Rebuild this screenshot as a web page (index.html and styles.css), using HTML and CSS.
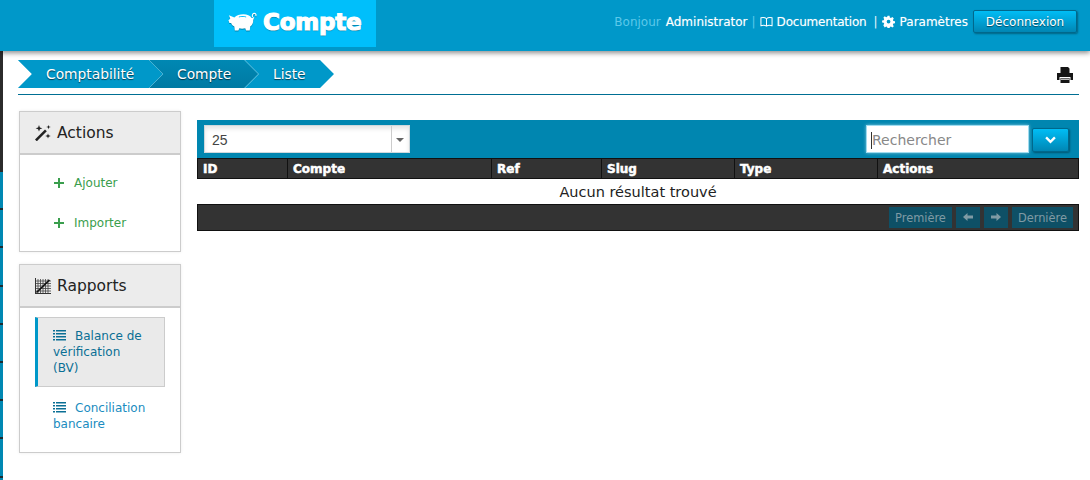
FILE: index.html
```html
<!DOCTYPE html>
<html lang="fr">
<head>
<meta charset="utf-8">
<title>Compte</title>
<link rel="stylesheet" href="styles.css">
</head>
<body>
<header class="topbar">
  <div class="brand">
    <svg class="pig" viewBox="0 0 32 22" width="29" height="20"><path fill="#fff" d="M1 3.500 L7 6 C9.500 3.500 13 2.500 17 2.500 C21 2.500 24.500 4 26 6.500 L29 5.500 L27.800 9 C28 12 26.500 15 24.500 16 L24 20.500 L20 20.500 L19 18 C16.500 18.500 14.500 18.500 12.500 18 L11.500 20.500 L7.500 20.500 L7 16 C5 15 3.800 13.500 3.500 12 L1.500 12 L0.500 9 L2.500 7.500 Z"/><path fill="none" stroke="#fff" stroke-width="1.200" d="M27 5.500 C26.500 3 27.500 1.500 29 1.500 C30.500 1.500 31.500 3 30.500 4.500"/><path fill="#00bffb" d="M12 5 C14 4.200 18 4.200 20 5 L20 6 C18 5.400 14 5.400 12 6 Z"/></svg>
    <span class="brand-text">Compte</span>
  </div>
  <nav class="usernav">
    <span class="hello">Bonjour</span>
    <a class="navlink">Administrator</a>
    <span class="sep dim">|</span>
    <svg class="navicon" viewBox="0 0 14 12" width="13" height="12"><path fill="none" stroke="#fff" stroke-width="1.100" d="M7 2.500 C5.500 1 3 1 1 1.500 L1 10 C3 9.500 5.500 9.500 7 10.500 C8.500 9.500 11 9.500 13 10 L13 1.500 C11 1 8.500 1 7 2.500 Z M7 2.500 L7 10.500"/></svg>
    <a class="navlink navlink-doc">Documentation</a>
    <span class="sep">|</span>
    <svg class="navicon navicon-gear" viewBox="0 0 14 14" width="13" height="13"><path fill="#fff" fill-rule="evenodd" d="M5.800 0h2.400l.4 2 1.300.6 1.800-1.100 1.700 1.700-1.100 1.800.6 1.300 2 .4v2.400l-2 .4-.6 1.300 1.100 1.800-1.700 1.700-1.800-1.100-1.300.6-.4 2H5.800l-.4-2-1.300-.6-1.800 1.100L.6 11.600l1.100-1.800-.6-1.300-2-.4V5.700l2-.4.6-1.300L.6 2.200 2.300.5l1.800 1.100 1.300-.6z M7 4.700a2.300 2.300 0 1 0 0 4.600 2.300 2.300 0 0 0 0-4.600z" transform="translate(.9 .9) scale(.88)"/></svg>
    <a class="navlink">Paramètres</a>
    <button class="logout">Déconnexion</button>
  </nav>
</header>

<div class="page">
  <div class="strip"></div>
  <div class="content">
    <div class="crumbbar">
      <ol class="crumbs">
        <li class="crumb crumb-first"><span class="crumb-fill">Comptabilité</span></li>
        <li class="crumb crumb-mid"><span class="crumb-fill">Compte</span></li>
        <li class="crumb crumb-last"><span class="crumb-fill">Liste</span></li>
      </ol>
      <svg class="printer" viewBox="0 0 16 16" width="16" height="16"><path fill="#151515" d="M3.500 0h7.500L12.500 1.500V6h-9z M0 6h16v7h-2.500v-3h-11v3H0z M3.500 11h9v5h-9z"/><path fill="#fff" d="M4 11.500h8v1.500h-8z" opacity=".7"/></svg>
    </div>

    <div class="columns">
      <aside class="sidebar">
        <section class="panel">
          <h2 class="panel-head">
            <svg class="panel-icon" viewBox="0 0 16 16" width="16" height="16"><path fill="#222" d="M0 14.500 L10 4.500 L11.800 6.300 L1.800 16.300 Z"/><path fill="#222" d="M4 0 L4.900 2.400 L7.400 3.300 L4.900 4.200 L4 6.600 L3.100 4.200 L.6 3.300 L3.100 2.400 Z M13.500 0 L14.100 1.400 L15.800 2 L14.100 2.600 L13.500 4.200 L12.900 2.600 L11.200 2 L12.900 1.400 Z M13 8.500 L13.700 10.300 L15.700 11 L13.700 11.700 L13 13.600 L12.300 11.700 L10.300 11 L12.300 10.300 Z"/></svg>
            Actions
          </h2>
          <ul class="panel-list actions">
            <li class="action"><svg class="plus" viewBox="0 0 10 10" width="10" height="10"><path fill="#3a9e4d" d="M4 0h2v4h4v2H6v4H4V6H0V4h4z"/></svg>Ajouter</li>
            <li class="action"><svg class="plus" viewBox="0 0 10 10" width="10" height="10"><path fill="#3a9e4d" d="M4 0h2v4h4v2H6v4H4V6H0V4h4z"/></svg>Importer</li>
          </ul>
        </section>
        <section class="panel">
          <h2 class="panel-head">
            <svg class="panel-icon" viewBox="0 0 16 16" width="16" height="16"><path fill="#333" d="M0 0h1v15h15v1H0z"/><path stroke="#444" stroke-width=".8" fill="none" d="M3 1v14M5.500 1v14M8 1v14M10.500 1v14M13 1v14M1 3h15M1 5.500h15M1 8h15M1 10.500h15M1 13h15"/><path stroke="#111" stroke-width="1.700" fill="none" d="M1.500 14.500L14.500 2"/></svg>
            Rapports
          </h2>
          <ul class="panel-list reports">
            <li class="report report-active"><svg class="listicon" viewBox="0 0 13 11" width="13" height="11"><path fill="#0a6f95" d="M0 0h2v1.500H0zM3 0h10v1.500H3zM0 3h2v1.500H0zM3 3h10v1.500H3zM0 6h2v1.500H0zM3 6h10v1.500H3zM0 9h2v1.500H0zM3 9h10v1.500H3z"/></svg>Balance de vérification (BV)</li>
            <li class="report"><svg class="listicon" viewBox="0 0 13 11" width="13" height="11"><path fill="#0a6f95" d="M0 0h2v1.500H0zM3 0h10v1.500H3zM0 3h2v1.500H0zM3 3h10v1.500H3zM0 6h2v1.500H0zM3 6h10v1.500H3zM0 9h2v1.500H0zM3 9h10v1.500H3z"/></svg>Conciliation bancaire</li>
          </ul>
        </section>
      </aside>

      <main class="main">
        <div class="toolbar">
          <div class="select">
            <span class="select-value">25</span>
            <span class="select-arrow"></span>
          </div>
          <div class="search">
            <div class="search-input"><span class="caret"></span>Rechercher</div>
            <button class="search-btn"><svg viewBox="0 0 12 8" width="11" height="8"><path fill="none" stroke="#fff" stroke-width="2.600" d="M1.200 1.200L6 6l4.800-4.800"/></svg></button>
          </div>
        </div>
        <table class="grid">
          <colgroup>
            <col class="c-id"><col class="c-compte"><col class="c-ref"><col class="c-slug"><col class="c-type"><col class="c-actions">
          </colgroup>
          <thead>
            <tr><th>ID</th><th>Compte</th><th>Ref</th><th>Slug</th><th>Type</th><th>Actions</th></tr>
          </thead>
          <tbody>
            <tr><td class="empty" colspan="6">Aucun résultat trouvé</td></tr>
          </tbody>
        </table>
        <div class="pager">
          <button class="page-btn">Première</button>
          <button class="page-btn page-icon"><svg viewBox="0 0 10 8" width="10" height="8"><path fill="#7f9aa4" d="M0 4L4.500 0v2.500H10v3H4.500V8z"/></svg></button>
          <button class="page-btn page-icon"><svg viewBox="0 0 10 8" width="10" height="8"><path fill="#7f9aa4" d="M10 4L5.500 0v2.500H0v3h5.500V8z"/></svg></button>
          <button class="page-btn">Dernière</button>
        </div>
      </main>
    </div>
  </div>
</div>
</body>
</html>
```
FILE: styles.css
```css
* { box-sizing: border-box; }
html, body { margin: 0; padding: 0; }
body {
  width: 1090px;
  height: 480px;
  overflow: hidden;
  background: #fff;
  font-family: "DejaVu Sans", Verdana, sans-serif;
  font-size: 12px;
  color: #222;
}
ul, ol { list-style: none; margin: 0; padding: 0; }
h2 { margin: 0; font-weight: normal; }

/* top bar */
.topbar {
  position: relative;
  z-index: 2;
  height: 51px;
  background: #0098c9;
  box-shadow: 0 2px 5px rgba(0, 0, 0, .45);
  display: flex;
  justify-content: space-between;
  padding: 0 13px 0 214px;
}
.brand {
  width: 162px;
  height: 47px;
  background: #00bffb;
  display: flex;
  align-items: center;
  gap: 6px;
  padding: 0 0 3px 14px;
}
.pig { filter: drop-shadow(0 1px 0 rgba(0, 0, 0, .3)); }
.brand-text {
  font-size: 23px;
  font-weight: bold;
  color: #fff;
  -webkit-text-stroke: 1.200px #fff;
  text-shadow: 0 1px 1px rgba(0, 0, 0, .5);
  letter-spacing: -.2px;
}
.usernav {
  display: flex;
  align-items: center;
  gap: 4px;
  height: 43px;
  font-size: 12px;
  color: #fff;
}
.hello { color: #5cc8ea; margin-right: 1px; }
.navlink { color: #fff; text-shadow: 0 0 1px rgba(255, 255, 255, .4); }
.navlink-doc { letter-spacing: -.2px; margin-right: 3px; }
.sep { color: #e8f6fb; }
.sep.dim { color: #5cc8ea; }
.navicon { flex: none; }
.navicon-gear { margin-right: 1px; }
.logout {
  margin-left: 1px;
  width: 104px;
  height: 23px;
  border: 1px solid #00688c;
  border-radius: 2px;
  background: linear-gradient(#00bdf5, #0086b4);
  color: #fff;
  font: 12px "DejaVu Sans", Verdana, sans-serif;
  text-shadow: 0 1px 1px rgba(0, 0, 0, .5);
  box-shadow: 1px 1px 2px rgba(0, 0, 0, .35);
  padding: 0;
}

/* page shell */
.page { display: flex; height: 429px; }
.strip {
  flex: none;
  width: 3px;
  height: 429px;
  background:
    linear-gradient(#2b2b2b, #2b2b2b) top / 3px 121px no-repeat,
    repeating-linear-gradient(#0088b3 0, #0088b3 36.2px, #1c2a30 36.2px, #1c2a30 38.2px) 0 121px;
}
.content { flex: 1; padding: 9px 11px 0 15px; }

/* breadcrumb */
.crumbbar {
  display: flex;
  justify-content: space-between;
  align-items: center;
  height: 35px;
  padding-bottom: 6px;
  padding-right: 6px;
  border-bottom: 1px solid #006f94;
}
.crumbs { display: flex; height: 28px; }
.crumb {
  height: 28px;
  background: #4bb9dc;
  clip-path: polygon(0 0, calc(100% - 14px) 0, 100% 50%, calc(100% - 14px) 100%, 0 100%, 14px 50%);
  margin-right: -14px;
  color: #fff;
  font-size: 13.800px;
  text-shadow: 0 1px 1px rgba(0, 0, 0, .6);
}
.crumb-fill {
  display: flex;
  align-items: center;
  height: 100%;
  background: #0098c9;
  clip-path: polygon(0 0, calc(100% - 15px) 0, calc(100% - 1px) 50%, calc(100% - 15px) 100%, 0 100%, 14px 50%);
}
.crumb-first { width: 145px; background: #0098c9; }
.crumb-first .crumb-fill { padding-left: 28px; }
.crumb-mid { width: 110px; }
.crumb-mid .crumb-fill {
  padding-left: 28px;
  background: linear-gradient(#0088b3, #007aa3);
}
.crumb-last { width: 89px; background: #0098c9; margin-right: 0; margin-left: 0; }
.crumb-last .crumb-fill { padding-left: 28px; }
.printer { flex: none; margin-top: 2px; }

/* columns */
.columns { display: flex; align-items: flex-start; gap: 16px; margin-left: 1px; }

/* sidebar */
.sidebar {
  flex: none;
  width: 162px;
  padding-top: 16px;
  display: flex;
  flex-direction: column;
  gap: 12px;
}
.panel {
  border: 1px solid #ccc;
  box-shadow: 0 0 3px rgba(0, 0, 0, .08);
  background: #fff;
}
.panel-head {
  height: 43px;
  background: #ececec;
  border-bottom: 2px solid #ccc;
  display: flex;
  align-items: center;
  gap: 6px;
  padding-left: 15px;
  font-size: 15.500px;
  color: #222;
}
.panel-icon { flex: none; }
.actions { padding: 8px 0 8px 34px; }
.action {
  display: flex;
  align-items: center;
  gap: 10px;
  height: 40px;
  color: #3a9e4d;
  font-size: 12px;
}
.plus { flex: none; }
.reports { padding: 9px 15px 10px; display: flex; flex-direction: column; gap: 3px; }
.report {
  padding: 10px 16px 10px 18px;
  line-height: 16px;
  color: #1a8cc0;
  font-size: 12px;
}
.report-active {
  background: #eaeaea;
  border: 1px solid #ccc;
  border-left: 3px solid #0098c9;
  color: #0a6f95;
  padding: 10px 16px 10px 15px;
}
.listicon { margin-right: 9px; vertical-align: -1px; }

/* main */
.main { flex: 1; padding-top: 25px; min-width: 0; }
.toolbar {
  height: 38px;
  background: #0086b0;
  display: flex;
  justify-content: space-between;
  align-items: flex-start;
  padding: 5px 10px 0 7px;
}
.select {
  width: 206px;
  height: 28px;
  background: #fff;
  border: 1px solid #cfd8dc;
  box-shadow: inset 0 3px 4px rgba(0, 0, 0, .1);
  display: flex;
  align-items: center;
  justify-content: space-between;
  font-family: "Liberation Sans", Arial, sans-serif;
  font-size: 14px;
  color: #444;
}
.select-value { padding: 2px 0 0 7px; }
.select-arrow {
  width: 18px;
  height: 26px;
  border-left: 1px solid #ccc;
  position: relative;
}
.select-arrow::after {
  content: "";
  position: absolute;
  left: 4px;
  top: 12px;
  border: 4px solid transparent;
  border-top-color: #666;
}
.search { display: flex; gap: 3px; align-items: flex-start; }
.search-input {
  width: 163px;
  height: 28px;
  background: #fff;
  border: 1px solid #9fdcf0;
  box-shadow: 0 0 3px rgba(255, 255, 255, .5);
  display: flex;
  align-items: center;
  padding: 2px 0 0 4px;
  font-size: 14px;
  color: #888;
}
.caret { width: 1px; height: 17px; background: #333; flex: none; }
.search-btn {
  width: 37px;
  height: 24px;
  margin-top: 3px;
  border: 1px solid #00688c;
  border-radius: 2px;
  background: linear-gradient(#00bdf5, #0086b4);
  box-shadow: 1px 1px 2px rgba(0, 0, 0, .35);
  padding: 0;
  display: flex;
  align-items: center;
  justify-content: center;
}

/* table */
.grid {
  width: 881px;
  border-collapse: collapse;
  table-layout: fixed;
}
.c-id { width: 90px; }
.c-compte { width: 204px; }
.c-ref { width: 110px; }
.c-slug { width: 133px; }
.c-type { width: 143px; }
.c-actions { width: 201px; }
.grid th {
  height: 20px;
  background: #333;
  border: 1px solid #111;
  color: #fff;
  font-size: 12px;
  font-weight: bold;
  -webkit-text-stroke: .5px #fff;
  text-align: left;
  padding: 1px 5px 0;
}
.empty {
  height: 25px;
  padding: 2px 0 0;
  text-align: center;
  font-size: 14.500px;
  color: #222;
}
.pager {
  height: 27px;
  background: #333;
  border: 1px solid #111;
  display: flex;
  justify-content: flex-end;
  align-items: center;
  gap: 4px;
  padding-right: 5px;
}
.page-btn {
  height: 21px;
  padding: 1px 6px 0;
  border: 0;
  background: #0e5066;
  color: #7f9aa4;
  font: 11.400px "DejaVu Sans", Verdana, sans-serif;
}
.page-icon { width: 24px; padding: 0; display: flex; align-items: center; justify-content: center; }
```
